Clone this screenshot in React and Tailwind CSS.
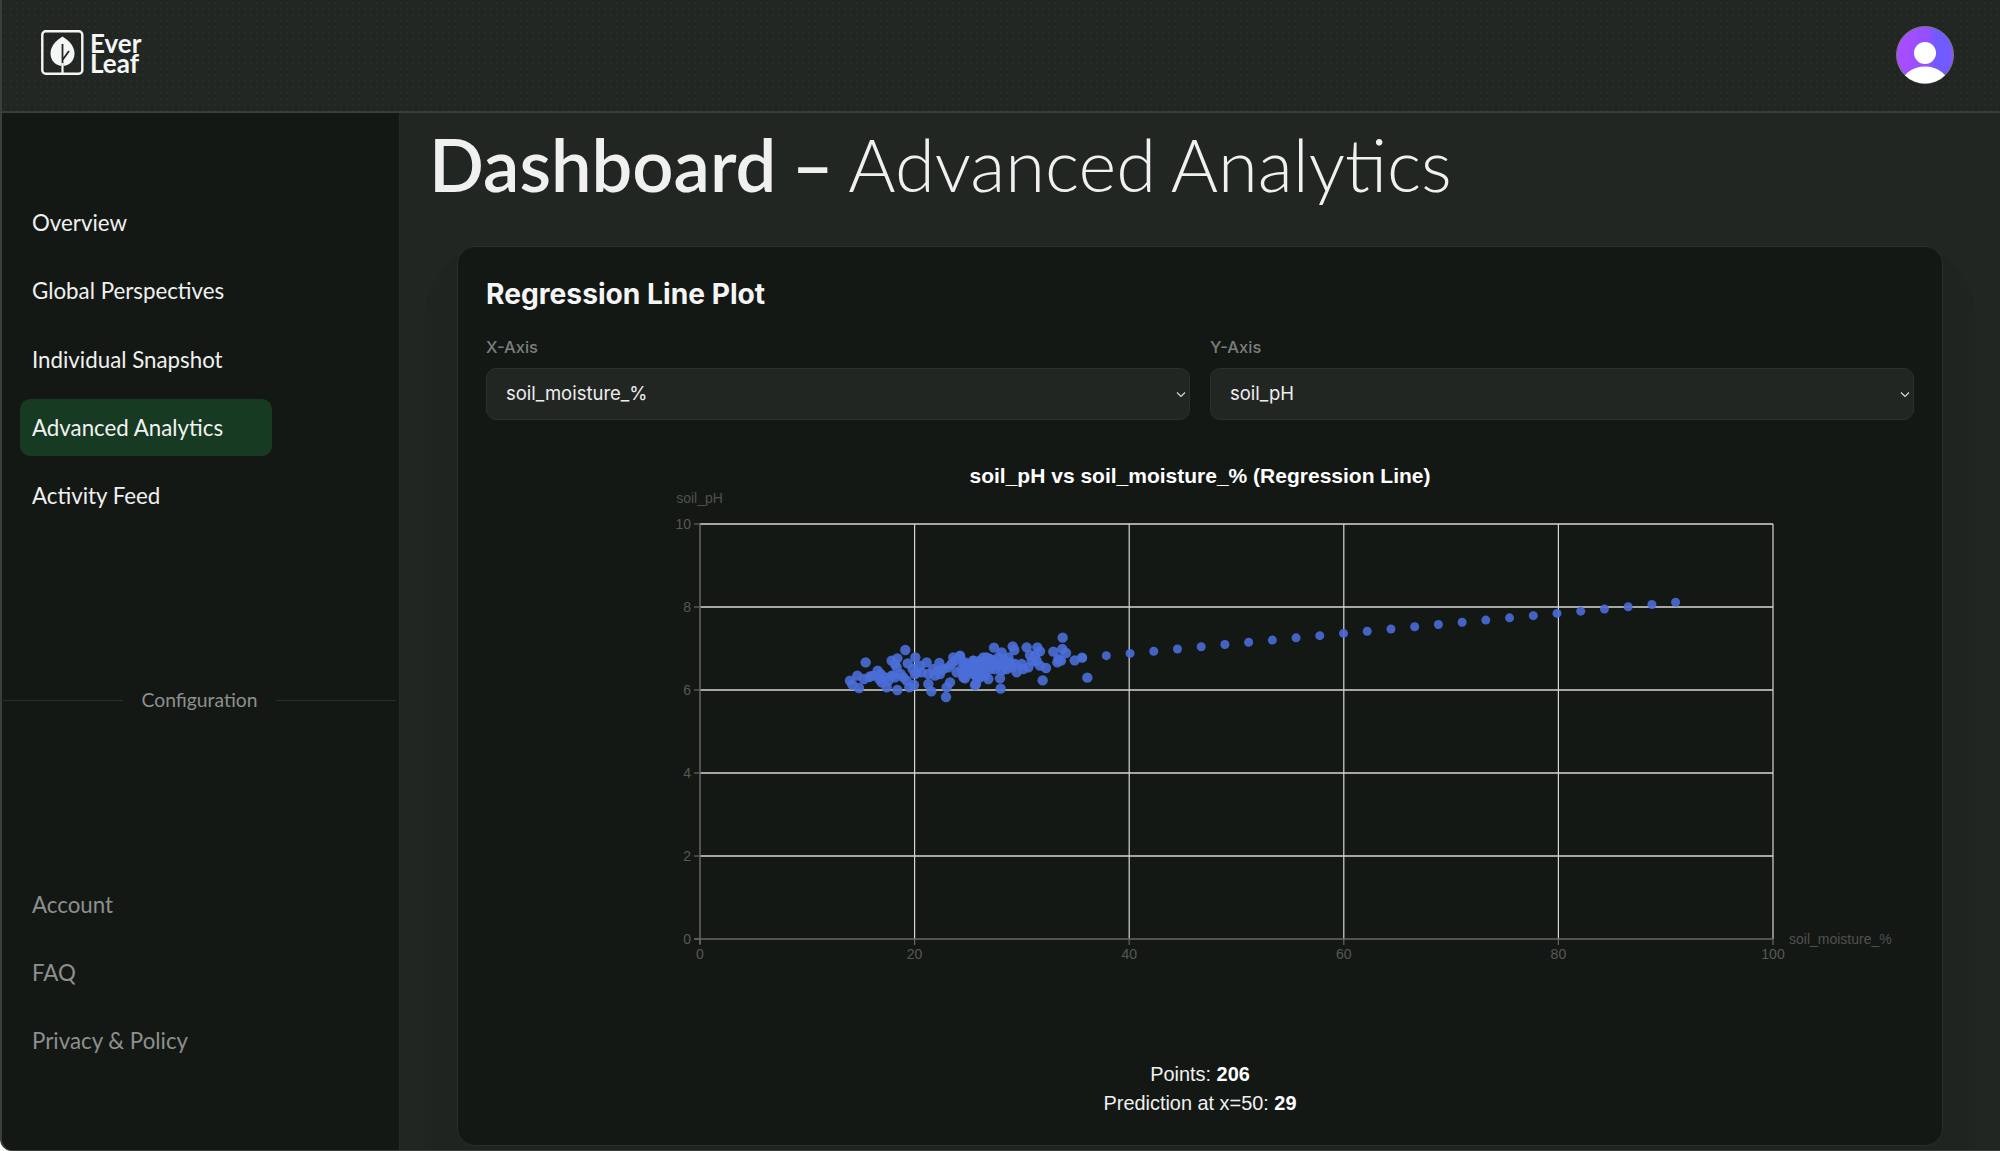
import React from "react";

const A = [[30,185],[37,197],[52,170],[57,207],[77,130],[72,180],[90,172],[113,155],[122,165],[118,180],[125,190],[140,205],[145,185],[165,175],[172,213],[155,125],[172,118],[165,135],[196,93],[170,145],[182,165],[190,175],[200,185],[208,205],[222,198],[226,115],[203,133],[218,150],[225,165],[240,140],[260,130],[245,160],[265,195],[274,217],[265,165],[285,170],[298,132],[295,155],[330,190],[320,205],[318,234],[325,145],[340,115],[360,110],[345,125],[375,130],[350,160],[370,175],[375,165],[400,125],[410,140],[405,165],[408,195],[415,175],[280,150],[300,165],[310,150],[335,135],[365,150],[385,145],[395,150],[135,175],[155,170],[100,170]];
const B = [[0,112],[10,130],[10,165],[15,178],[40,125],[45,150],[50,175],[45,198],[60,125],[65,140],[70,165],[80,115],[90,150],[85,180],[102,86],[100,125],[110,140],[120,178],[122,209],[125,100],[130,120],[150,130],[158,82],[163,93],[140,150],[170,160],[185,135],[190,150],[205,145],[200,85],[210,108],[232,85],[240,97],[230,125],[240,140],[258,147],[248,184],[280,98],[308,56],[307,90],[318,102],[295,120],[303,125],[292,130],[344,124],[366,116],[382,176],[30,135],[30,160],[55,140],[75,130],[75,150],[60,160],[95,130],[115,115],[135,140],[50,130],[70,115],[90,120],[105,150],[120,135],[145,115],[125,155],[60,175],[75,170],[40,165],[155,145],[165,135],[215,125],[225,110]];
const cluster = [...A.map(([x, y]) => [840 + x / 3, 620 + y / 3]), ...B.map(([x, y]) => [960 + x / 3, 620 + y / 3])];
const line = Array.from({ length: 35 }, (_, i) => {
  const x = 1675.6 - i * 23.72;
  return [x, 603.3 + (1675.6 - x) * 0.0937];
}).filter(([x]) => x > 850);

const xTicks = [[700, "0"], [914.6, "20"], [1129.2, "40"], [1343.8, "60"], [1558.4, "80"], [1773, "100"]];
const yTicks = [[525, "10"], [608, "8"], [691, "6"], [774, "4"], [857, "2"], [940, "0"]];

function Logo() {
  return (
    <div className="mb-[5px] flex items-center gap-[6px]">
      <svg width="43" height="46" viewBox="0 0 43 46" className="block">
        <rect x="1.3" y="1.3" width="40" height="42.4" rx="3.5" fill="none" stroke="#f5f5f5" strokeWidth="2.4" />
        <path d="M21.5 6.5C27 10 33.5 15.5 33.5 23.5C33.5 31 28 36 21.5 36C15 36 9.5 31 9.5 23.5C9.5 15.5 16 10 21.5 6.5Z" fill="#f5f5f5" />
        <path d="M21.5 14V36M21.5 30L28 21" stroke="#212623" strokeWidth="1.8" fill="none" />
        <path d="M21.5 33V43" stroke="#f5f5f5" strokeWidth="2.2" />
      </svg>
      <div className="w-[56px] font-['Lato',sans-serif] text-[26px] leading-[20px] font-bold text-[#f5f5f5]">
        Ever Leaf
      </div>
    </div>
  );
}

function Avatar() {
  return (
    <svg width="60" height="60" viewBox="0 0 60 60" className="mb-[2px] block">
      <defs>
        <linearGradient id="av" x1="0" y1="0" x2="1" y2="0">
          <stop offset="0" stopColor="#aa4dff" />
          <stop offset="0.55" stopColor="#9450ff" />
          <stop offset="0.7" stopColor="#6f5bff" />
          <stop offset="0.93" stopColor="#6f5bff" />
          <stop offset="1" stopColor="#9a50f5" />
        </linearGradient>
        <clipPath id="avc"><circle cx="30" cy="30" r="28.5" /></clipPath>
      </defs>
      <circle cx="30" cy="30" r="28.5" fill="url(#av)" stroke="#77797a" strokeWidth="1" />
      <g clipPath="url(#avc)">
        <circle cx="30" cy="28" r="11" fill="#fff" />
        <ellipse cx="30" cy="61" rx="24" ry="19.5" fill="#fff" />
      </g>
    </svg>
  );
}

function NavItem({ label, active, muted }) {
  return (
    <div className={`flex h-[57px] w-[252px] items-center rounded-[10px] px-3 text-[22.3px] ${active ? "bg-[#163a22] text-[#f2f2f2]" : muted ? "text-[#8d908e]" : "text-[#f0f0f0]"}`}>
      {label}
    </div>
  );
}

function Select({ value }) {
  return (
    <div className="flex h-[52px] items-center justify-between rounded-[10px] border border-[#2b302d] bg-[#212623] pr-[2px] pl-[19px] text-[18.5px] text-[#eeeeee]">
      <span>{value}</span>
      <svg width="12" height="12" viewBox="0 0 12 12" fill="none" stroke="#d8d8d8" strokeWidth="1.2"><path d="M2 4.5l4 4 4-4" /></svg>
    </div>
  );
}

function Chart() {
  return (
    <svg width="1428" height="484" viewBox="486 490 1428 484" className="block font-['Liberation_Sans',sans-serif]">
      {xTicks.slice(1).map(([x]) => <line key={x} x1={x} x2={x} y1="525" y2="940" stroke="#d6d6d6" strokeWidth="1.2" />)}
      {yTicks.slice(0, 5).map(([y]) => <line key={y} x1="700" x2="1773" y1={y} y2={y} stroke="#d6d6d6" strokeWidth="1.4" />)}
      <line x1="700" x2="700" y1="525" y2="945" stroke="#666" strokeWidth="1.5" />
      <line x1="694" x2="1773" y1="940" y2="940" stroke="#666" strokeWidth="1.5" />
      {yTicks.map(([y, t]) => (
        <g key={t}>
          <line x1="694" x2="700" y1={y} y2={y} stroke="#666" strokeWidth="1.2" />
          <text x="691" y={y + 5} textAnchor="end" fontSize="14" fill="#565856">{t}</text>
        </g>
      ))}
      {xTicks.map(([x, t]) => (
        <g key={t}>
          <line x1={x} x2={x} y1="940" y2="946" stroke="#666" strokeWidth="1.2" />
          <text x={x} y="960" textAnchor="middle" fontSize="14" fill="#565856">{t}</text>
        </g>
      ))}
      <text x="699.5" y="504" textAnchor="middle" fontSize="14" fill="#4f514f">soil_pH</text>
      <text x="1789" y="945" fontSize="14" fill="#4f514f">soil_moisture_%</text>
      {line.map(([x, y], i) => <circle key={i} cx={x} cy={y} r="4.5" fill="#4a6ad8" fillOpacity="0.9" />)}
      {cluster.map(([x, y], i) => <circle key={i} cx={x} cy={y} r="5.2" fill="#4a6ed8" fillOpacity="0.9" />)}
    </svg>
  );
}

export default function App() {
  return (
    <div className="flex h-[1151px] w-[2000px] flex-col overflow-hidden rounded-bl-[12px] border-b border-l-[2px] border-[#3a3f3c] bg-[#212623] font-['Inter',sans-serif]">
      <header className="flex h-[113px] shrink-0 items-center justify-between border-b-[2px] border-[#393e3b] bg-[#212623] bg-[radial-gradient(#272c29_0.8px,transparent_0.8px)] bg-[size:6px_6px] pr-[45px] pl-[39px]">
        <Logo />
        <Avatar />
      </header>
      <div className="flex min-h-0 flex-1">
        <aside className="flex w-[398px] shrink-0 flex-col border-r border-[#262b28] bg-[#141815] font-['Lato',sans-serif]">
          <nav className="flex flex-col gap-[11.2px] pt-[81.5px] pl-[18px]">
            <NavItem label="Overview" />
            <NavItem label="Global Perspectives" />
            <NavItem label="Individual Snapshot" />
            <NavItem label="Advanced Analytics" active />
            <NavItem label="Activity Feed" />
          </nav>
          <div className="mt-[165px] flex items-center gap-[19px] pr-[3px] pl-[1px] text-[19.3px] leading-[22px] text-[#8d908e]">
            <div className="h-px flex-1 bg-[#2a2f2c]" />
            <span>Configuration</span>
            <div className="h-px flex-1 bg-[#2a2f2c]" />
          </div>
          <nav className="mt-[164.5px] flex flex-col gap-[11.2px] pl-[18px]">
            <NavItem label="Account" muted />
            <NavItem label="FAQ" muted />
            <NavItem label="Privacy & Policy" muted />
          </nav>
        </aside>
        <main className="flex min-w-0 flex-1 flex-col px-[25px]">
          <h1 className="ml-[4px] h-[133px] pt-[11px] font-['Lato',sans-serif] text-[72.3px] leading-[80px] font-light [word-spacing:-2.5px] text-[#f0f0f0]">
            <span className="font-semibold">Dashboard –</span> Advanced Analytics
          </h1>
          <div className="flex-1 rounded-t-[70px] bg-[#1f2421] px-[32px]">
            <section className="h-[900px] rounded-[18px] border border-[#2a2f2c] bg-[#141815] pt-[30px] pr-[28px] pl-[28px]">
              <h2 className="text-[28.2px] leading-[34px] font-bold text-[#f5f5f5]">Regression Line Plot</h2>
              <div className="mt-[26px] grid grid-cols-2 gap-[20px]">
                <div>
                  <div className="mb-[11px] text-[16.5px] leading-[20px] font-medium text-[#7b7f7c]">X-Axis</div>
                  <Select value="soil_moisture_%" />
                </div>
                <div>
                  <div className="mb-[11px] text-[16.5px] leading-[20px] font-medium text-[#7b7f7c]">Y-Axis</div>
                  <Select value="soil_pH" />
                </div>
              </div>
              <div className="mt-[43px] text-center font-['Liberation_Sans',sans-serif] text-[21px] leading-[26px] font-bold text-white">soil_pH vs soil_moisture_% (Regression Line)</div>
              <Chart />
              <div className="mt-[87px] text-center font-['Liberation_Sans',sans-serif] text-[19.9px] leading-[28.5px] text-[#f0f0f0]">
                <div>Points: <b className="text-white">206</b></div>
                <div>Prediction at x=50: <b className="text-white">29</b></div>
              </div>
            </section>
          </div>
        </main>
      </div>
    </div>
  );
}
